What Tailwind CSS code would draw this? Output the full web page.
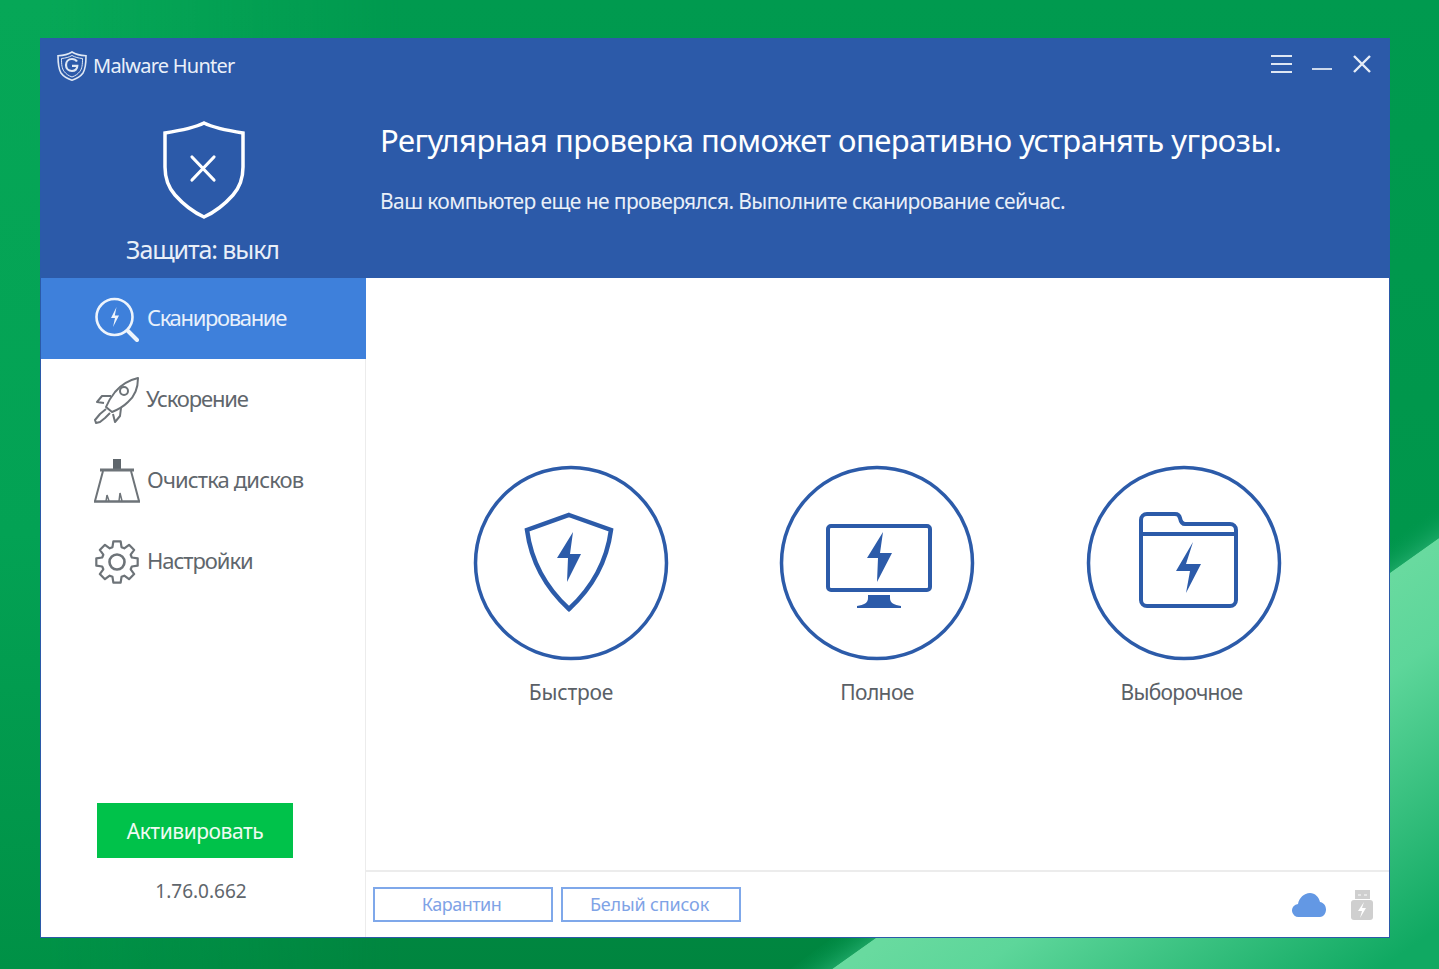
<!DOCTYPE html>
<html lang="ru">
<head>
<meta charset="utf-8">
<script src="https://cdn.jsdelivr.net/npm/@tailwindcss/browser@4"></script>
</head>
<body class="m-0">
<div class="relative w-[1439px] h-[969px] overflow-hidden bg-[#00934b] font-['Noto_Sans','Open_Sans',sans-serif]">
  <svg class="absolute inset-0" width="1439" height="969" viewBox="0 0 1439 969">
    <defs>
      <linearGradient id="bg" x1="0" y1="0" x2="0" y2="1"><stop offset="0" stop-color="#009a4f"/><stop offset="0.55" stop-color="#00964b"/><stop offset="1" stop-color="#00853f"/></linearGradient>
      <linearGradient id="leftglow" x1="0" y1="0" x2="0" y2="1"><stop offset="0" stop-color="#06a757"/><stop offset="0.55" stop-color="#03a254"/><stop offset="1" stop-color="#009146"/></linearGradient>
      <linearGradient id="leftfade" x1="0" y1="0" x2="1" y2="0"><stop offset="0" stop-color="#fff"/><stop offset="0.12" stop-color="#fff"/><stop offset="1" stop-color="#000"/></linearGradient>
      <mask id="lm"><rect width="400" height="969" fill="url(#leftfade)"/></mask>
      <linearGradient id="lite" gradientUnits="userSpaceOnUse" x1="1150" y1="750" x2="1332" y2="1004"><stop offset="0" stop-color="#68da9f"/><stop offset="0.25" stop-color="#5dd69a"/><stop offset="1" stop-color="#10a962"/></linearGradient>
      <linearGradient id="band" gradientUnits="userSpaceOnUse" x1="1150" y1="756" x2="1128" y2="725"><stop offset="0" stop-color="#2fb578"/><stop offset="1" stop-color="#009650" stop-opacity="0"/></linearGradient>
    </defs>
    <rect width="1439" height="969" fill="url(#bg)"/>
    <rect width="400" height="969" fill="url(#leftglow)" mask="url(#lm)"/>
    <polygon points="832,969 1439,538 1439,969" fill="url(#lite)"/>
    <polygon points="832,969 1439,538 1439,488 790,969" fill="url(#band)"/>
  </svg>

  <div class="absolute left-[40px] top-[38px] w-[1350px] h-[900px] flex flex-col bg-white border border-[#2b5aa8]">
    <header class="h-[239px] shrink-0 bg-[#2c5aa9] flex flex-col">
      <div class="h-[54px] pl-[16px] pr-[17px] flex items-center justify-between">
        <div class="flex items-center gap-[6px]">
          <svg width="30" height="30" viewBox="0 0 30 30" fill="none" stroke="#dfe8f4">
            <path d="M15 1C11 3.500 6 4.500 1 4.800 1 14 1.500 18 4 22c2.500 3.500 6 5.500 11 7.200 5-1.700 8.500-3.700 11-7.200 2.500-4 3-8 3-17.200C24 4.500 19 3.500 15 1z" stroke-width="1.600"/>
            <path d="M15 4.500c-3 1.800-6.500 2.600-10.500 3 0 6.500.5 10 2.500 12.800 2 2.700 4.500 4.400 8 5.700 3.500-1.300 6-3 8-5.700 2-2.800 2.500-6.300 2.500-12.800-4-.4-7.500-1.200-10.500-3z" stroke-width="1"/>
            <path d="M20 10.500C19 9 17.200 8 15 8c-3.500 0-6 2.600-6 6s2.500 6 6 6c3 0 5.300-2 5.300-5.200H15" stroke-width="2.200"/>
          </svg>
          <span class="text-[20px] leading-none text-[#eaf0f9] tracking-[-0.75px]">Malware Hunter</span>
        </div>
        <div class="flex items-center gap-[20px] pb-[4px]">
          <svg width="21" height="20" viewBox="0 0 21 20" stroke="#dfe7f3" stroke-width="1.800"><path d="M0 2h21M0 10h21M0 18h21"/></svg>
          <svg width="20" height="20" viewBox="0 0 20 20" stroke="#dfe7f3" stroke-width="1.800"><path d="M0 15h20"/></svg>
          <svg width="20" height="20" viewBox="0 0 20 20" stroke="#e6edf7" stroke-width="2.400"><path d="M2 2l16 16M18 2L2 18"/></svg>
        </div>
      </div>
      <div class="flex flex-1">
        <div class="w-[325px] shrink-0 flex flex-col items-center">
          <svg class="mt-[28px]" width="84" height="98" viewBox="0 0 84 98" fill="none" stroke="#fff" stroke-linecap="round">
            <path d="M42 2C34 6 22 9 3 12V46C3 58 6 66 13 74 21 83 31 91 42 96 53 91 63 83 71 74 78 66 81 58 81 46V12C62 9 50 6 42 2z" stroke-width="3.500"/>
            <path d="M30 36l22 23M52 36L30 59" stroke-width="3.200"/>
          </svg>
          <span class="mt-[15px] pr-[2px] text-[25px] leading-[30px] text-[#e9eff8] tracking-[-1.1px]">Защита: выкл</span>
        </div>
        <div class="flex-1 pl-[14px]">
          <h1 class="mt-[27px] text-[31px] leading-[40px] font-normal text-white tracking-[-0.5px]">Регулярная проверка поможет оперативно устранять угрозы.</h1>
          <p class="mt-[26px] text-[21px] leading-[30px] text-[#e9eff8] tracking-[-0.6px]">Ваш компьютер еще не проверялся. Выполните сканирование сейчас.</p>
        </div>
      </div>
    </header>

    <div class="flex flex-1 min-h-0">
      <aside class="w-[325px] shrink-0 border-r border-[#ececec] flex flex-col">
        <nav class="flex flex-col">
          <div class="h-[81px] -mr-px bg-[#3e80db] flex items-center pl-[52px] gap-[8px] text-[#e8f0fb]">
            <svg width="46" height="46" viewBox="0 0 46 46" fill="none" stroke="#eef4fc" stroke-width="2.600" stroke-linecap="round">
              <circle cx="21.500" cy="21" r="18"/>
              <path d="M35 35l9 9" stroke-width="4"/>
              <path d="M23.500 11l-5.500 11h4l-2 9 6-11.500h-4.200z" fill="#eef4fc" stroke="none"/>
            </svg>
            <span class="mb-[4px] text-[22px] leading-none tracking-[-1.35px]">Сканирование</span>
          </div>
          <div class="h-[81px] flex items-center pl-[52px] gap-[7px] text-[#5f666c]">
            <svg width="46" height="48" viewBox="0 0 46 48" fill="none" stroke="#6d7378" stroke-width="2" stroke-linejoin="round">
              <path d="M45 2C36 4 28 9 22 16 18 21 15 26 13 31l6 5c5-2 11-5 16-10 7-6 10-15 10-24z"/>
              <circle cx="31" cy="15" r="4"/>
              <path d="M18 20H9l-5 6 7 1"/>
              <path d="M28 32l-1 8-5 6-2-8"/>
              <path d="M13 33l-6 5-5 6 1 3 4-1 5-4 5-5"/>
            </svg>
            <span class="mb-[4px] text-[22px] leading-none tracking-[-1.15px]">Ускорение</span>
          </div>
          <div class="h-[81px] flex items-center pl-[52px] gap-[7px] text-[#5f666c]">
            <svg width="47" height="44" viewBox="0 0 47 44" fill="none" stroke="#6d7378" stroke-width="2">
              <path d="M20 0h8v10h-8z" fill="#5f666c" stroke="none"/>
              <path d="M7 11h34" stroke-width="3"/>
              <path d="M10 12L2 42M38 12l8 30"/>
              <path d="M1 42.500h46" stroke-width="2.500"/>
              <path d="M13 42l1-6 2 6M26 42l1-8 2 8" stroke-width="1.500"/>
            </svg>
            <span class="mb-[4px] text-[22px] leading-none tracking-[-0.85px]">Очистка дисков</span>
          </div>
          <div class="h-[81px] flex items-center pl-[52px] gap-[8px] text-[#5f666c]">
            <svg width="46" height="46" viewBox="-24 -23 46 46" fill="none" stroke="#6d7378" stroke-width="2.200" stroke-linejoin="round">
              <path d="M-4.530-14.820L-3.650-20.680 3.650-20.680 4.530-14.820 7.280-13.680 12.040-17.200 17.200-12.040 13.680-7.280 14.820-4.530 20.680-3.650 20.680 3.650 14.820 4.530 13.680 7.280 17.200 12.040 12.040 17.200 7.280 13.680 4.530 14.820 3.650 20.680-3.650 20.680-4.530 14.820-7.280 13.680-12.040 17.200-17.200 12.040-13.680 7.280-14.820 4.530-20.680 3.650-20.680-3.650-14.820-4.530-13.680-7.280-17.200-12.040-12.040-17.200-7.280-13.680z"/>
              <circle r="7.500" stroke-width="2.600"/>
            </svg>
            <span class="mb-[4px] text-[22px] leading-none tracking-[-1.05px]">Настройки</span>
          </div>
        </nav>
        <div class="mt-auto flex flex-col items-center pb-[34px] pr-[16px]">
          <button class="w-[196px] h-[55px] pt-[2px] bg-[#00c24a] text-[#f0fbf3] text-[21px] leading-none tracking-[-0.45px]">Активировать</button>
          <span class="mt-[21px] text-[19px] leading-[24px] text-[#5f666c] pl-[12px]">1.76.0.662</span>
        </div>
      </aside>

      <main class="flex-1 flex flex-col min-w-0">
        <div class="flex-1 flex pl-[107px] pt-[187px]">
          <div class="w-[196px] flex flex-col items-center">
            <svg width="196" height="196" viewBox="0 0 196 196" fill="none" stroke="#2c5ba9">
              <circle cx="98" cy="98" r="95.500" stroke-width="3.500"/>
              <path d="M96 50L138 65C134 95 120 122 96 144 72 122 58 95 54 65z" stroke-width="4.500"/>
              <path d="M100 67L84 93H95L94 117 108 89H97z" fill="#2c5ba9" stroke="none"/>
            </svg>
            <span class="mt-[16px] text-[21px] leading-[30px] text-[#5a6066] tracking-[-0.2px]">Быстрое</span>
          </div>
          <div class="w-[196px] ml-[110px] flex flex-col items-center">
            <svg width="196" height="196" viewBox="0 0 196 196" fill="none" stroke="#2c5ba9">
              <circle cx="98" cy="98" r="95.500" stroke-width="3.500"/>
              <rect x="49" y="61" width="102" height="64" rx="3" stroke-width="4"/>
              <path d="M104 67L88 93H99L98 117 113 88H101z" fill="#2c5ba9" stroke="none"/>
              <path d="M89 130h22v3c0 5 4 7 11 8v2H78v-2c7-1 11-3 11-8z" fill="#2c5ba9" stroke="none"/>
            </svg>
            <span class="mt-[16px] text-[21px] leading-[30px] text-[#5a6066] tracking-[-0.6px]">Полное</span>
          </div>
          <div class="w-[196px] ml-[111px] flex flex-col items-center">
            <svg width="196" height="196" viewBox="0 0 196 196" fill="none" stroke="#2c5ba9">
              <circle cx="98" cy="98" r="95.500" stroke-width="3.500"/>
              <g transform="translate(53 47)" stroke-width="4">
                <path d="M2 8a6 6 0 0 1 6-6h28c3 0 4.500 1.500 5 4 .6 3 1.500 6 5 6h45a6 6 0 0 1 6 6v70a6 6 0 0 1-6 6H8a6 6 0 0 1-6-6z"/>
                <path d="M2 22h95"/>
                <path d="M54 30L37 59H51L47 81 62 52H47z" fill="#2c5ba9" stroke="none"/>
              </g>
            </svg>
            <span class="mt-[16px] pr-[5px] text-[21px] leading-[30px] text-[#5a6066] tracking-[-0.7px]">Выборочное</span>
          </div>
        </div>
        <footer class="h-[67px] shrink-0 border-t-2 border-[#ececec] flex items-center pl-[7px] pr-[15px]">
          <button class="w-[180px] h-[35px] pr-[3px] pb-[2px] border-2 border-[#7fa8ea] text-[#7fa3e6] text-[18px] leading-none tracking-[-0.5px]">Карантин</button>
          <button class="w-[180px] h-[35px] ml-[8px] pr-[3px] pb-[2px] border-2 border-[#7fa8ea] text-[#7fa3e6] text-[18px] leading-none tracking-[-0.15px]">Белый список</button>
          <svg class="ml-auto" width="34" height="26" viewBox="0 0 34 26"><path d="M7 25a6.500 6.500 0 0 1-1-13c1-6 6-11 12-11 5 0 9 4 10 9 3 .5 6 3 6 7.500 0 4.500-3 7.500-6 7.500z" fill="#6398e4"/></svg>
          <svg class="ml-[24px]" width="24" height="30" viewBox="0 0 24 30"><path d="M5 0h15v9H5z" fill="#cfcfcf"/><path d="M8 5h3M14 5h3" stroke="#fff"/><rect x="1" y="10" width="22" height="20" rx="3" fill="#cfcfcf"/><path d="M14 12l-6 9h4l-2 7 6-10h-4z" fill="#fff"/></svg>
        </footer>
      </main>
    </div>
  </div>
</div>
</body>
</html>
